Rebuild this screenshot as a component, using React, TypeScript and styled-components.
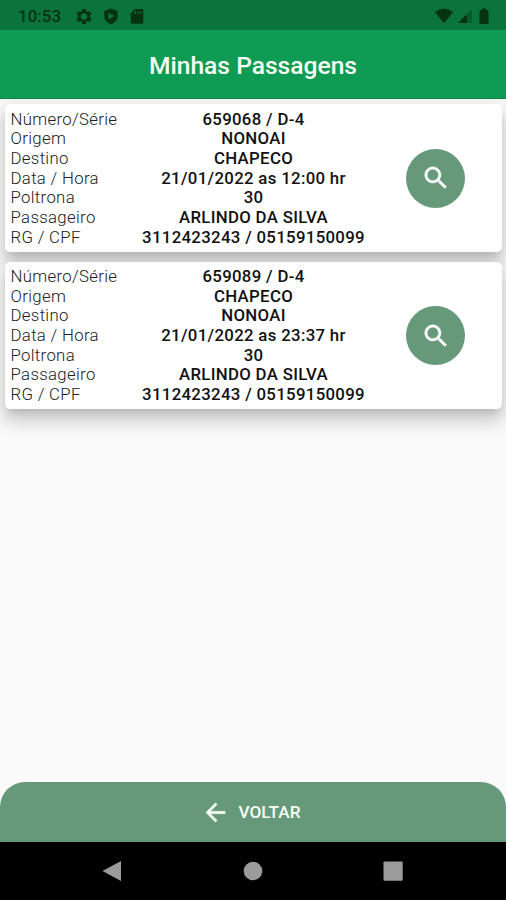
import React from "react";
import styled, { createGlobalStyle } from "styled-components";

const GlobalStyle = createGlobalStyle`
  * { box-sizing: border-box; }
  body { margin: 0; background: #fafafa; }
`;

const Screen = styled.div`
  display: flex;
  flex-direction: column;
  width: 506px;
  height: 900px;
  overflow: hidden;
  background: #fafafa;
  font-family: Roboto, sans-serif;
`;

const StatusBar = styled.div`
  display: flex;
  flex: none;
  align-items: center;
  justify-content: space-between;
  height: 30px;
  padding: 2px 14px 0 18px;
  background: #0b743d;
  color: #03340f;
`;

const StatusGroup = styled.div<{ $gap: number }>`
  display: flex;
  align-items: center;
  gap: ${(p) => p.$gap}px;
`;

const Clock = styled.span`
  width: 47px;
  font-size: 17px;
  font-weight: 500;
  line-height: 20px;
`;

const Icon = styled.svg`
  display: block;
  flex: none;
  fill: currentColor;
`;

const Header = styled.header`
  display: flex;
  flex: none;
  align-items: center;
  justify-content: center;
  height: 69px;
  padding-top: 3px;
  border-bottom: 1px solid #078846;
  background: #109b54;
`;

const Title = styled.h1`
  margin: 0;
  color: #f8fff5;
  font-size: 24.6px;
  font-weight: 500;
  line-height: 30px;
  white-space: nowrap;
`;

const List = styled.main`
  display: flex;
  flex: 1;
  flex-direction: column;
  gap: 10px;
  padding: 5px 4px 0 5px;
  overflow: hidden;
`;

const Card = styled.article`
  display: grid;
  flex: none;
  grid-template-columns: 119px 248px 1fr;
  height: 147.5px;
  padding: 5.5px 0 0 5.5px;
  border-radius: 5px;
  background: #fff;
  box-shadow:
    0 6px 8px -4px rgba(0, 0, 0, 0.14),
    0 12px 17px 1px rgba(0, 0, 0, 0.13),
    0 5px 22px 4px rgba(0, 0, 0, 0.09);
`;

const Column = styled.div<{ $center?: boolean }>`
  display: flex;
  flex-direction: column;
  align-items: ${(p) => (p.$center ? "center" : "flex-start")};
`;

const Label = styled.span`
  color: #202020;
  font-size: 16.8px;
  font-weight: 300;
  line-height: 19.67px;
  letter-spacing: 0.32px;
  white-space: nowrap;
`;

const Value = styled.span`
  color: #111;
  font-size: 16.8px;
  font-weight: 500;
  line-height: 19.67px;
  letter-spacing: 0.32px;
  white-space: nowrap;
`;

const Action = styled.div`
  display: flex;
  align-items: center;
  padding: 0 0 5px 28.5px;
`;

const SearchButton = styled.button`
  display: flex;
  align-items: center;
  justify-content: center;
  width: 59px;
  height: 59px;
  padding: 0;
  border: 0;
  border-radius: 50%;
  background: #66997a;
  color: #fff;
`;

const BackButton = styled.button`
  display: flex;
  flex: none;
  align-items: center;
  justify-content: center;
  gap: 9px;
  height: 60px;
  padding: 0 5px 0 0;
  border: 0;
  border-radius: 25px 25px 0 0;
  background: #66997a;
  color: #f7fff7;
  font-family: inherit;
  font-size: 17.2px;
  font-weight: 500;
  line-height: 20px;
`;

const NavBar = styled.nav`
  display: flex;
  flex: none;
  align-items: center;
  justify-content: space-between;
  height: 58px;
  padding: 0 103px 0 101px;
  background: #000;
  color: #9b9b9b;
`;

const labels = ["Número/Série", "Origem", "Destino", "Data / Hora", "Poltrona", "Passageiro", "RG / CPF"];

const tickets = [
  ["659068 / D-4", "NONOAI", "CHAPECO", "21/01/2022 as 12:00 hr", "30", "ARLINDO DA SILVA", "3112423243 / 05159150099"],
  ["659089 / D-4", "CHAPECO", "NONOAI", "21/01/2022 as 23:37 hr", "30", "ARLINDO DA SILVA", "3112423243 / 05159150099"],
];

const GEAR =
  "M19.43 12.98c.04-.32.07-.64.07-.98s-.03-.66-.07-.98l2.11-1.65c.19-.15.24-.42.12-.64l-2-3.46c-.12-.22-.39-.3-.61-.22l-2.49 1c-.52-.4-1.08-.73-1.69-.98l-.38-2.65C14.46 2.18 14.25 2 14 2h-4c-.25 0-.46.18-.49.42l-.38 2.65c-.61.25-1.17.59-1.69.98l-2.49-1c-.23-.09-.49 0-.61.22l-2 3.46c-.13.22-.07.49.12.64l2.11 1.65c-.04.32-.07.65-.07.98s.03.66.07.98l-2.11 1.65c-.19.15-.24.42-.12.64l2 3.46c.12.22.39.3.61.22l2.49-1c.52.4 1.08.73 1.69.98l.38 2.65c.03.24.24.42.49.42h4c.25 0 .46-.18.49-.42l.38-2.65c.61-.25 1.17-.59 1.69-.98l2.49 1c.23.09.49 0 .61-.22l2-3.46c.12-.22.07-.49-.12-.64l-2.11-1.65zM12 16.3c-2.4 0-4.3-1.9-4.3-4.3s1.9-4.3 4.3-4.3 4.3 1.9 4.3 4.3-1.9 4.3-4.3 4.3z";

const SEARCH =
  "M15.5 14h-.79l-.28-.27C15.41 12.59 16 11.11 16 9.5 16 5.91 13.09 3 9.5 3S3 5.91 3 9.5 5.91 16 9.5 16c1.61 0 3.09-.59 4.23-1.57l.27.28v.79l5 4.99L20.49 19l-4.99-5zm-6 0C7.01 14 5 11.99 5 9.5S7.01 5 9.5 5 14 7.01 14 9.5 11.99 14 9.5 14z";

const TicketCard = ({ values }: { values: string[] }) => (
  <Card>
    <Column>
      {labels.map((label) => (
        <Label key={label}>{label}</Label>
      ))}
    </Column>
    <Column $center>
      {values.map((value, i) => (
        <Value key={i}>{value}</Value>
      ))}
    </Column>
    <Action>
      <SearchButton aria-label="Ver passagem">
        <Icon width="30" height="30" viewBox="0 0 24 24" stroke="currentColor" strokeWidth=".3">
          <path d={SEARCH} />
        </Icon>
      </SearchButton>
    </Action>
  </Card>
);

export default function App() {
  return (
    <>
      <GlobalStyle />
      <Screen>
        <StatusBar>
          <StatusGroup $gap={11}>
            <Clock>10:53</Clock>
            <Icon width="16" height="17" viewBox="1.5 1.5 21 21">
              <path fillRule="evenodd" d={GEAR} />
            </Icon>
            <Icon width="16" height="17" viewBox="0 0 16 17">
              <path fillRule="evenodd" d="M8 .5 14.7 3v5c0 4-2.8 7-6.7 8.3C4.100 15 1.300 12 1.300 8V3ZM5.500 5v6.300L11.300 8Z" />
            </Icon>
            <Icon width="14" height="17" viewBox="0 0 14 17">
              <path fillRule="evenodd" d="M5 1h7q1.300 0 1.300 1.300v12.200q0 1.300-1.300 1.300H2Q.7 15.800.7 14.500V5.300ZM4.800 3.200v2.500h1.200V3.200Zm2.500 0v2.500h1.200V3.200Zm2.500 0v2.500h1.200V3.200Z" />
            </Icon>
          </StatusGroup>
          <StatusGroup $gap={3}>
            <Icon width="20" height="16" viewBox="0 0 20 16">
              <path d="M10 15.200.8 4Q10-3 19.200 4Z" />
            </Icon>
            <Icon width="16" height="16" viewBox="0 0 16 16">
              <path opacity=".35" d="M15 1v14H1Z" />
              <path d="M10 6v9H1Z" />
            </Icon>
            <Icon width="16" height="17" viewBox="0 0 16 17">
              <path d="M6 .5h4V2h1.500q1 0 1 1v12q0 1-1 1h-7q-1 0-1-1V3q0-1 1-1H6Z" />
            </Icon>
          </StatusGroup>
        </StatusBar>
        <Header>
          <Title>Minhas Passagens</Title>
        </Header>
        <List>
          {tickets.map((values) => (
            <TicketCard key={values[0]} values={values} />
          ))}
        </List>
        <BackButton>
          <Icon width="29" height="29" viewBox="0 0 24 24" stroke="currentColor" strokeWidth=".3">
            <path d="M20 11H7.830l5.590-5.590L12 4l-8 8 8 8 1.410-1.410L7.830 13H20v-2z" />
          </Icon>
          VOLTAR
        </BackButton>
        <NavBar>
          <Icon width="21" height="22" viewBox="0 0 21 22">
            <path d="M20 1v20L1.500 11Z" />
          </Icon>
          <Icon width="20" height="20" viewBox="0 0 20 20">
            <circle cx="10" cy="10" r="9.300" />
          </Icon>
          <Icon width="20" height="20" viewBox="0 0 20 20">
            <rect x=".5" y=".5" width="19.200" height="19.200" rx="1" />
          </Icon>
        </NavBar>
      </Screen>
    </>
  );
}
